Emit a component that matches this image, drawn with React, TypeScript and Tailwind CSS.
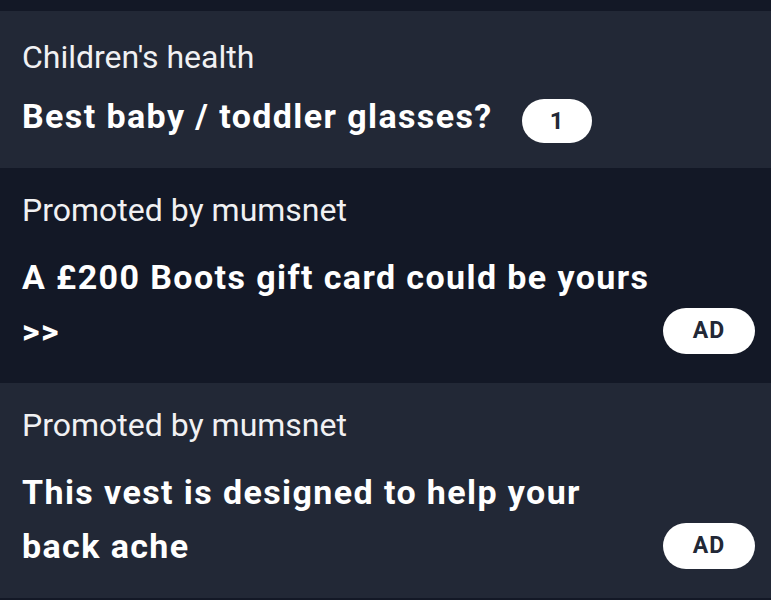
import React from 'react';

type Post = {
  label: string;
  title: string;
  badge: string;
};

const thread: Post = { label: "Children's health", title: 'Best baby / toddler glasses?', badge: '1' };

const promoted: Post[] = [
  { label: 'Promoted by mumsnet', title: 'A £200 Boots gift card could be yours >>', badge: 'AD' },
  { label: 'Promoted by mumsnet', title: 'This vest is designed to help your back ache', badge: 'AD' },
];

export default function App() {
  return (
    <div className="w-[771px] h-[600px] overflow-hidden bg-[#131826] font-['Roboto',sans-serif] text-white">
      <div className="h-[11px]" />

      {/* Thread row */}
      <div className="bg-[#222836] pl-[22px] pr-4 pt-[26px] pb-[25px]">
        <div className="text-[32px] leading-[40px] text-[#f1f1f3]">{thread.label}</div>
        <div className="mt-[12px] flex items-end gap-[29px]">
          <span className="text-[34px] leading-[54px] font-bold tracking-[1.4px]">{thread.title}</span>
          <span className="h-[44px] w-[70px] rounded-full bg-white text-[#222836] text-[24px] font-bold flex items-center justify-center">
            {thread.badge}
          </span>
        </div>
      </div>

      {/* Promoted rows */}
      {promoted.map((p, i) => (
        <div
          key={i}
          className={`relative pl-[22px] pr-4 pt-[22px] pb-[25px] ${i === 0 ? 'bg-[#131826]' : 'bg-[#222836]'}`}
        >
          <div className="text-[32px] leading-[40px] text-[#f1f1f3]">{p.label}</div>
          <div className="mt-[20px] w-[634px] text-[34px] leading-[54px] font-bold tracking-[1.4px]">{p.title}</div>
          <span className="absolute right-4 bottom-[29px] h-[46px] w-[92px] rounded-full bg-white text-[#222836] text-[23px] font-bold tracking-[1px] flex items-center justify-center">
            {p.badge}
          </span>
        </div>
      ))}
    </div>
  );
}
